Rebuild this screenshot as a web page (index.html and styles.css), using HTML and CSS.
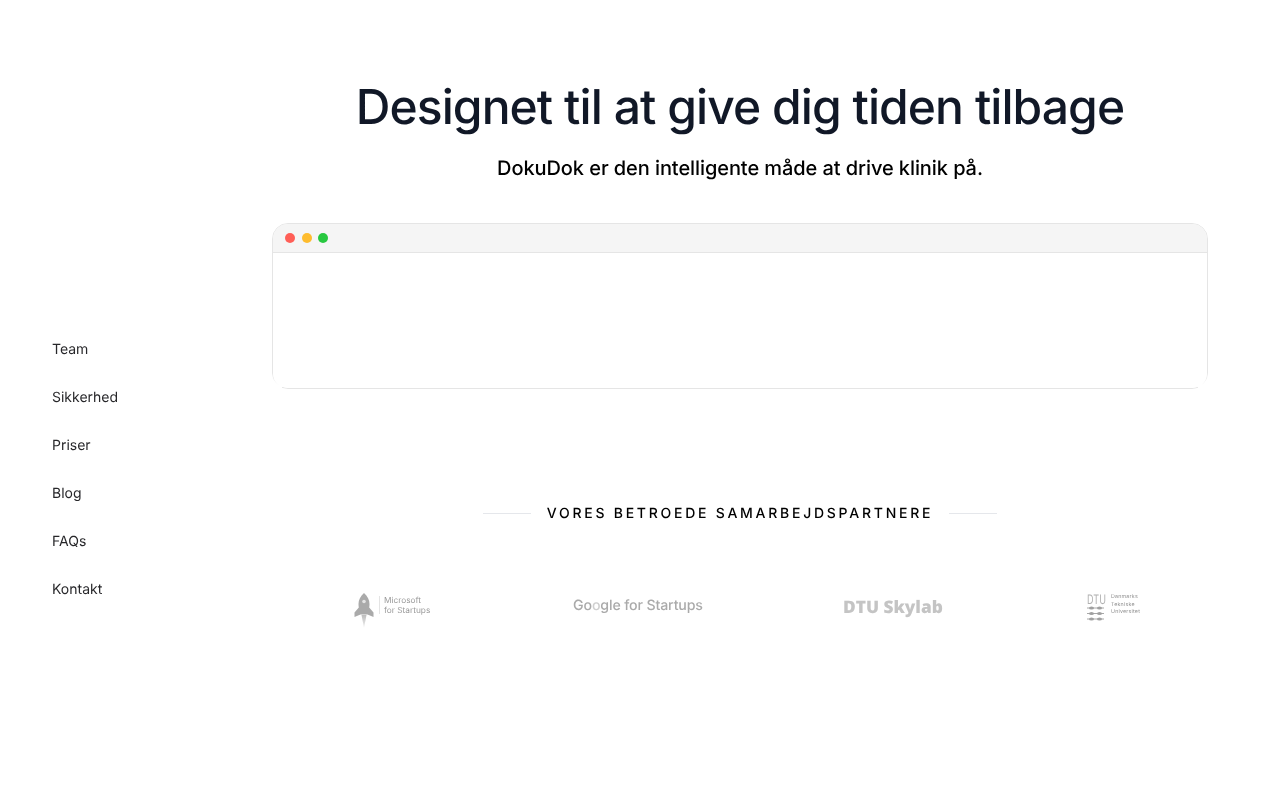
FILE: index.html
```html
<!DOCTYPE html>
<html lang="da">
<head>
<meta charset="utf-8">
<title>DokuDok</title>
<link rel="stylesheet" href="styles.css">
</head>
<body>
<div class="page">
  <aside class="side">
    <nav class="nav">
      <a href="#">Team</a>
      <a href="#">Sikkerhed</a>
      <a href="#">Priser</a>
      <a href="#">Blog</a>
      <a href="#">FAQs</a>
      <a href="#">Kontakt</a>
    </nav>
  </aside>
  <main class="main">
    <h1 class="title">Designet til at give dig tiden tilbage</h1>
    <p class="sub">DokuDok er den intelligente måde at drive klinik på.</p>
    <div class="window-wrap">
      <section class="window">
        <div class="bar">
          <span class="dot red"></span><span class="dot yellow"></span><span class="dot green"></span>
        </div>
        <div class="pane"></div>
      </section>
    </div>
    <div class="partners-head">
      <span class="rule"></span>
      <span class="partners-text">VORES BETROEDE SAMARBEJDSPARTNERE</span>
      <span class="rule"></span>
    </div>
    <div class="logos">
      <div class="logo ms">
        <svg class="rocket" width="20" height="35" viewBox="0 0 20 35"><defs><linearGradient id="trail" x1="0" y1="0" x2="0" y2="1"><stop offset="0" stop-color="#bdbdbd"/><stop offset="1" stop-color="#f2f2f2"/></linearGradient></defs><path d="M10 0c3.600 3 5.500 7 5.500 11 0 1.200-.1 2.300-.3 3.400L19.500 19.500V24l-6-2.600h-7l-6 2.600v-4.500l4.300-5.100C4.600 13.300 4.500 12.200 4.500 11 4.500 7 6.400 3 10 0z" fill="#aaaaaa"/><circle cx="10" cy="8.500" r="1.800" fill="#e4e4e4"/><path d="M7.500 22h5L10 35z" fill="url(#trail)"/></svg>
        <span class="ms-sep"></span>
        <span class="ms-text">Microsoft<br>for Startups</span>
      </div>
      <div class="logo goog"><span>Go<span class="o2">o</span>gle for Startups</span></div>
      <div class="logo dtu">DTU Skylab</div>
      <div class="logo uni">
        <div class="uni-mark">
          <span class="uni-dtu">DTU</span>
          <svg width="17" height="15" viewBox="0 0 17 15"><path d="M0 2h17M0 7.500h17M0 13h17" stroke="#a8a8a8" stroke-width="1"/><g fill="#a0a0a0"><ellipse cx="4.500" cy="2" rx="2.500" ry="1.500"/><ellipse cx="12.500" cy="2" rx="2.500" ry="1.500"/><ellipse cx="4.500" cy="7.500" rx="2.500" ry="1.500"/><ellipse cx="12.500" cy="7.500" rx="2.500" ry="1.500"/><ellipse cx="4.500" cy="13" rx="2.500" ry="1.500"/><ellipse cx="12.500" cy="13" rx="2.500" ry="1.500"/></g></svg>
        </div>
        <div class="uni-text">Danmarks<br>Tekniske<br>Universitet</div>
      </div>
    </div>
  </main>
</div>
</body>
</html>
```
FILE: styles.css
```css
* { box-sizing: border-box; }
html, body { margin: 0; padding: 0; background: #fff; }
body { font-family: Inter, "Liberation Sans", sans-serif; height: 800px; overflow: hidden; text-rendering: geometricPrecision; }
.page { display: flex; height: 800px; will-change: transform; }
.side { width: 272px; flex: none; padding: 326px 0 0 52px; }
.nav { display: flex; flex-direction: column; }
.nav a { height: 48px; line-height: 48px; font-size: 14px; color: #27272a; text-decoration: none; }
.main { width: 936px; flex: none; padding-top: 75px; display: flex; flex-direction: column; align-items: center; }
.title { margin: 0; font-size: 48px; line-height: 64px; font-weight: 500; letter-spacing: -0.94px; color: #111827; text-align: center; }
.sub { margin: 13px 0 0; font-size: 20px; line-height: 32px; font-weight: 500; letter-spacing: -0.08px; color: #000; text-align: center; }
.window-wrap { width: 936px; height: 166px; margin-top: 39px; flex: none; position: relative; }
.window-wrap::before, .window-wrap::after { content: ""; position: absolute; bottom: 0; width: 10px; height: 14px; background: linear-gradient(rgba(255,255,255,0), #fff 70%); }
.window-wrap::before { left: 0; }
.window-wrap::after { right: 0; }
.window { height: 166px; border: 1px solid #e5e5e5; border-radius: 16px; overflow: hidden; background: #fff; display: flex; flex-direction: column; }
.bar { height: 29px; flex: none; background: #f5f5f5; border-bottom: 1px solid #e5e5e5; display: flex; align-items: center; gap: 6.330px; padding: 0 0 0 12.300px; }
.dot { width: 10px; height: 10px; border-radius: 50%; }
.red { background: #ff5f57; }
.yellow { background: #febc2e; }
.green { background: #28c840; }
.pane { flex: 1; background: #fff; }
.partners-head { display: flex; align-items: center; gap: 16px; margin-top: 114px; height: 20px; }
.rule { width: 48px; height: 1px; background: #e5e7eb; }
.partners-text { font-size: 14px; font-weight: 500; letter-spacing: 2.74px; color: #000; line-height: 20px; margin-top: 2px; }
.logos { width: 936px; display: flex; align-items: center; height: 50px; margin-top: 59px; }
.logo { flex: none; display: flex; align-items: center; filter: blur(0.5px); color: #a0a0a0; }
.ms { margin-left: 82px; width: 77px; gap: 4.500px; }
.rocket { flex: none; margin-top: 6px; }
.ms-sep { width: 1px; height: 18px; background: #e4e4e4; flex: none; margin-top: -4px; }
.ms-text { font-size: 8.300px; line-height: 10.500px; color: #9a9a9a; white-space: nowrap; margin-top: -2px; }
.goog { margin-left: 142px; font-size: 14.200px; font-weight: 500; letter-spacing: -0.15px; color: #aaaaaa; white-space: nowrap; width: 131px; margin-top: -4px; }
.o2 { color: #cfcfcf; }
.dtu { margin-left: 139px; font-family: "Open Sans", sans-serif; font-weight: 800; font-size: 17.300px; color: #c4c4c4; white-space: nowrap; width: 102px; margin-top: 0; }
.uni { margin-left: 142px; gap: 7px; }
.uni-mark { display: flex; flex-direction: column; gap: 0; width: 17px; }
.uni-dtu { font-size: 13px; line-height: 12px; color: #b0b0b0; transform: scaleX(0.7); transform-origin: left center; white-space: nowrap; }
.uni-text { font-size: 5.300px; line-height: 7.500px; color: #909090; white-space: nowrap; margin-top: -3px; letter-spacing: 0.2px; }
```
